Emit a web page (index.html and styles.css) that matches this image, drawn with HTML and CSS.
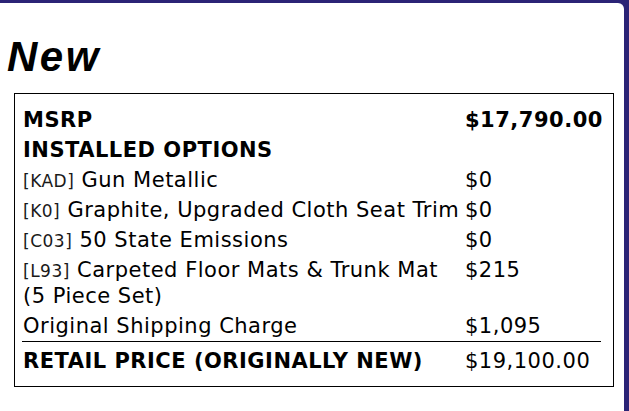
FILE: index.html
```html
<!DOCTYPE html>
<html>
<head>
<meta charset="utf-8">
<link rel="stylesheet" href="styles.css">
</head>
<body>
<div class="page">
  <h1 class="title">New</h1>
  <div class="box">
    <table class="prices">
      <colgroup><col class="c-label"><col class="c-value"></colgroup>
      <tr class="strong"><td>MSRP</td><td>$17,790.00</td></tr>
      <tr class="strong"><td>INSTALLED OPTIONS</td><td></td></tr>
      <tr><td><span class="code">[KAD]</span> Gun Metallic</td><td>$0</td></tr>
      <tr><td><span class="code">[K0]</span> Graphite, Upgraded Cloth Seat Trim</td><td>$0</td></tr>
      <tr><td><span class="code">[C03]</span> 50 State Emissions</td><td>$0</td></tr>
      <tr><td><span class="code">[L93]</span> Carpeted Floor Mats &amp; Trunk Mat (5 Piece Set)</td><td>$215</td></tr>
      <tr><td>Original Shipping Charge</td><td>$1,095</td></tr>
      <tr class="total"><td>RETAIL PRICE (ORIGINALLY NEW)</td><td>$19,100.00</td></tr>
    </table>
  </div>
</div>
</body>
</html>
```

FILE: styles.css
```css
html, body {
  margin: 0;
  padding: 0;
  background: #2b2376;
  height: 100%;
}
.page {
  margin: 3px 5px 0 0;
  height: 408px;
  background: #ffffff;
  border-top-right-radius: 6px;
  padding-top: 30px;
  box-sizing: border-box;
  overflow: hidden;
}
.title {
  margin: 0 0 12px 7px;
  font-family: "Liberation Sans", Arial, sans-serif;
  font-weight: bold;
  font-style: italic;
  font-size: 42px;
  letter-spacing: 2.5px;
  line-height: 48px;
  color: #000;
}
.box {
  margin-left: 14px;
  width: 600px;
  box-sizing: border-box;
  border: 1px solid #000;
  padding: 11px 7px 10px 7px;
}
.prices {
  width: 579px;
  table-layout: fixed;
  border-collapse: collapse;
  font-family: "DejaVu Sans", Verdana, sans-serif;
  font-size: 21px;
  letter-spacing: 0.5px;
  line-height: 26px;
  color: #000;
}
.c-label { width: 442px; }
.prices td {
  padding: 2px 1px;
  vertical-align: top;
}
.strong td {
  font-weight: bold;
}
.code {
  font-size: 17px;
  line-height: 1;
  color: #1a1a1a;
}
.total td {
  border-top: 1px solid #000;
  padding-top: 6px;
}
.total td:first-child {
  font-weight: bold;
}
```
